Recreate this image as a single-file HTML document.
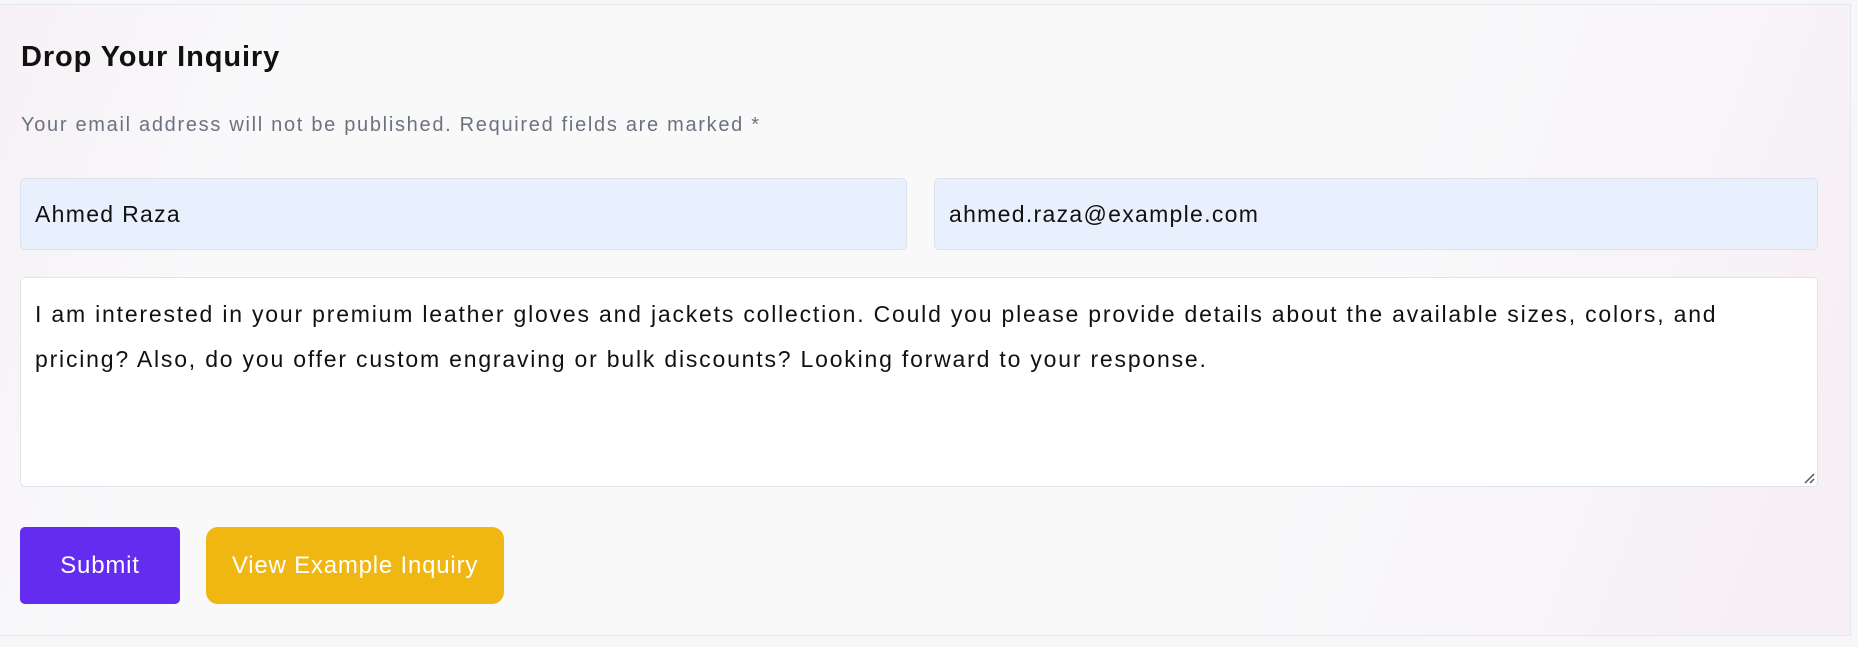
<!DOCTYPE html>
<html><head><meta charset="utf-8"><style>
html,body{margin:0;padding:0;width:1858px;height:647px;background:#f7f6f8;overflow:hidden;font-family:"Liberation Sans",Arial,sans-serif;}
.card{position:absolute;left:0;top:4px;width:1851px;height:632px;border:1px solid #e5e7eb;border-left:none;box-sizing:border-box;background:linear-gradient(110deg,#f6f1f6 0%,#f9f9fa 15%,#f9f9fa 70%,#f6eef5 100%);}
h2{position:absolute;left:21px;top:36px;margin:0;font-size:29px;font-weight:bold;color:#111;letter-spacing:0.9px;}
.sub{position:absolute;left:21px;top:109px;font-size:20px;color:#6b7280;letter-spacing:1.7px;}
.in{position:absolute;top:173px;height:72px;background:#e8f0fe;border:1px solid #dbe2ee;border-radius:5px;box-sizing:border-box;font-size:23px;color:#111;padding-left:14px;line-height:70px;letter-spacing:1.3px;}
.ta{position:absolute;left:20px;top:272px;width:1798px;height:210px;background:#fff;border:1px solid #dfe3ea;border-radius:5px;box-sizing:border-box;padding:14px 14px;font-size:23px;line-height:45px;color:#111;letter-spacing:1.8px;white-space:nowrap;}
.btn{position:absolute;top:522px;height:77px;border-radius:5px;color:#fff;font-size:24px;text-align:center;line-height:77px;letter-spacing:0.8px;}
</style></head><body>
<div class="card">
<h2>Drop Your Inquiry</h2>
<div class="sub">Your email address will not be published. Required fields are marked *</div>
<div class="in" style="left:20px;width:887px;">Ahmed Raza</div>
<div class="in" style="left:934px;width:884px;">ahmed.raza@example.com</div>
<div class="ta">I am interested in your premium leather gloves and jackets collection. Could you please provide details about the available sizes, colors, and<br>pricing? Also, do you offer custom engraving or bulk discounts? Looking forward to your response.
<svg style="position:absolute;right:2px;bottom:2px" width="12" height="12"><path d="M2 11L11 2M7 11L11 7" stroke="#555" stroke-width="1.5"/></svg></div>
<div class="btn" style="left:20px;width:160px;background:#632cef;">Submit</div>
<div class="btn" style="left:206px;width:298px;background:#f0b612;border-radius:12px;white-space:nowrap;">View Example Inquiry</div>
</div>
</body></html>
